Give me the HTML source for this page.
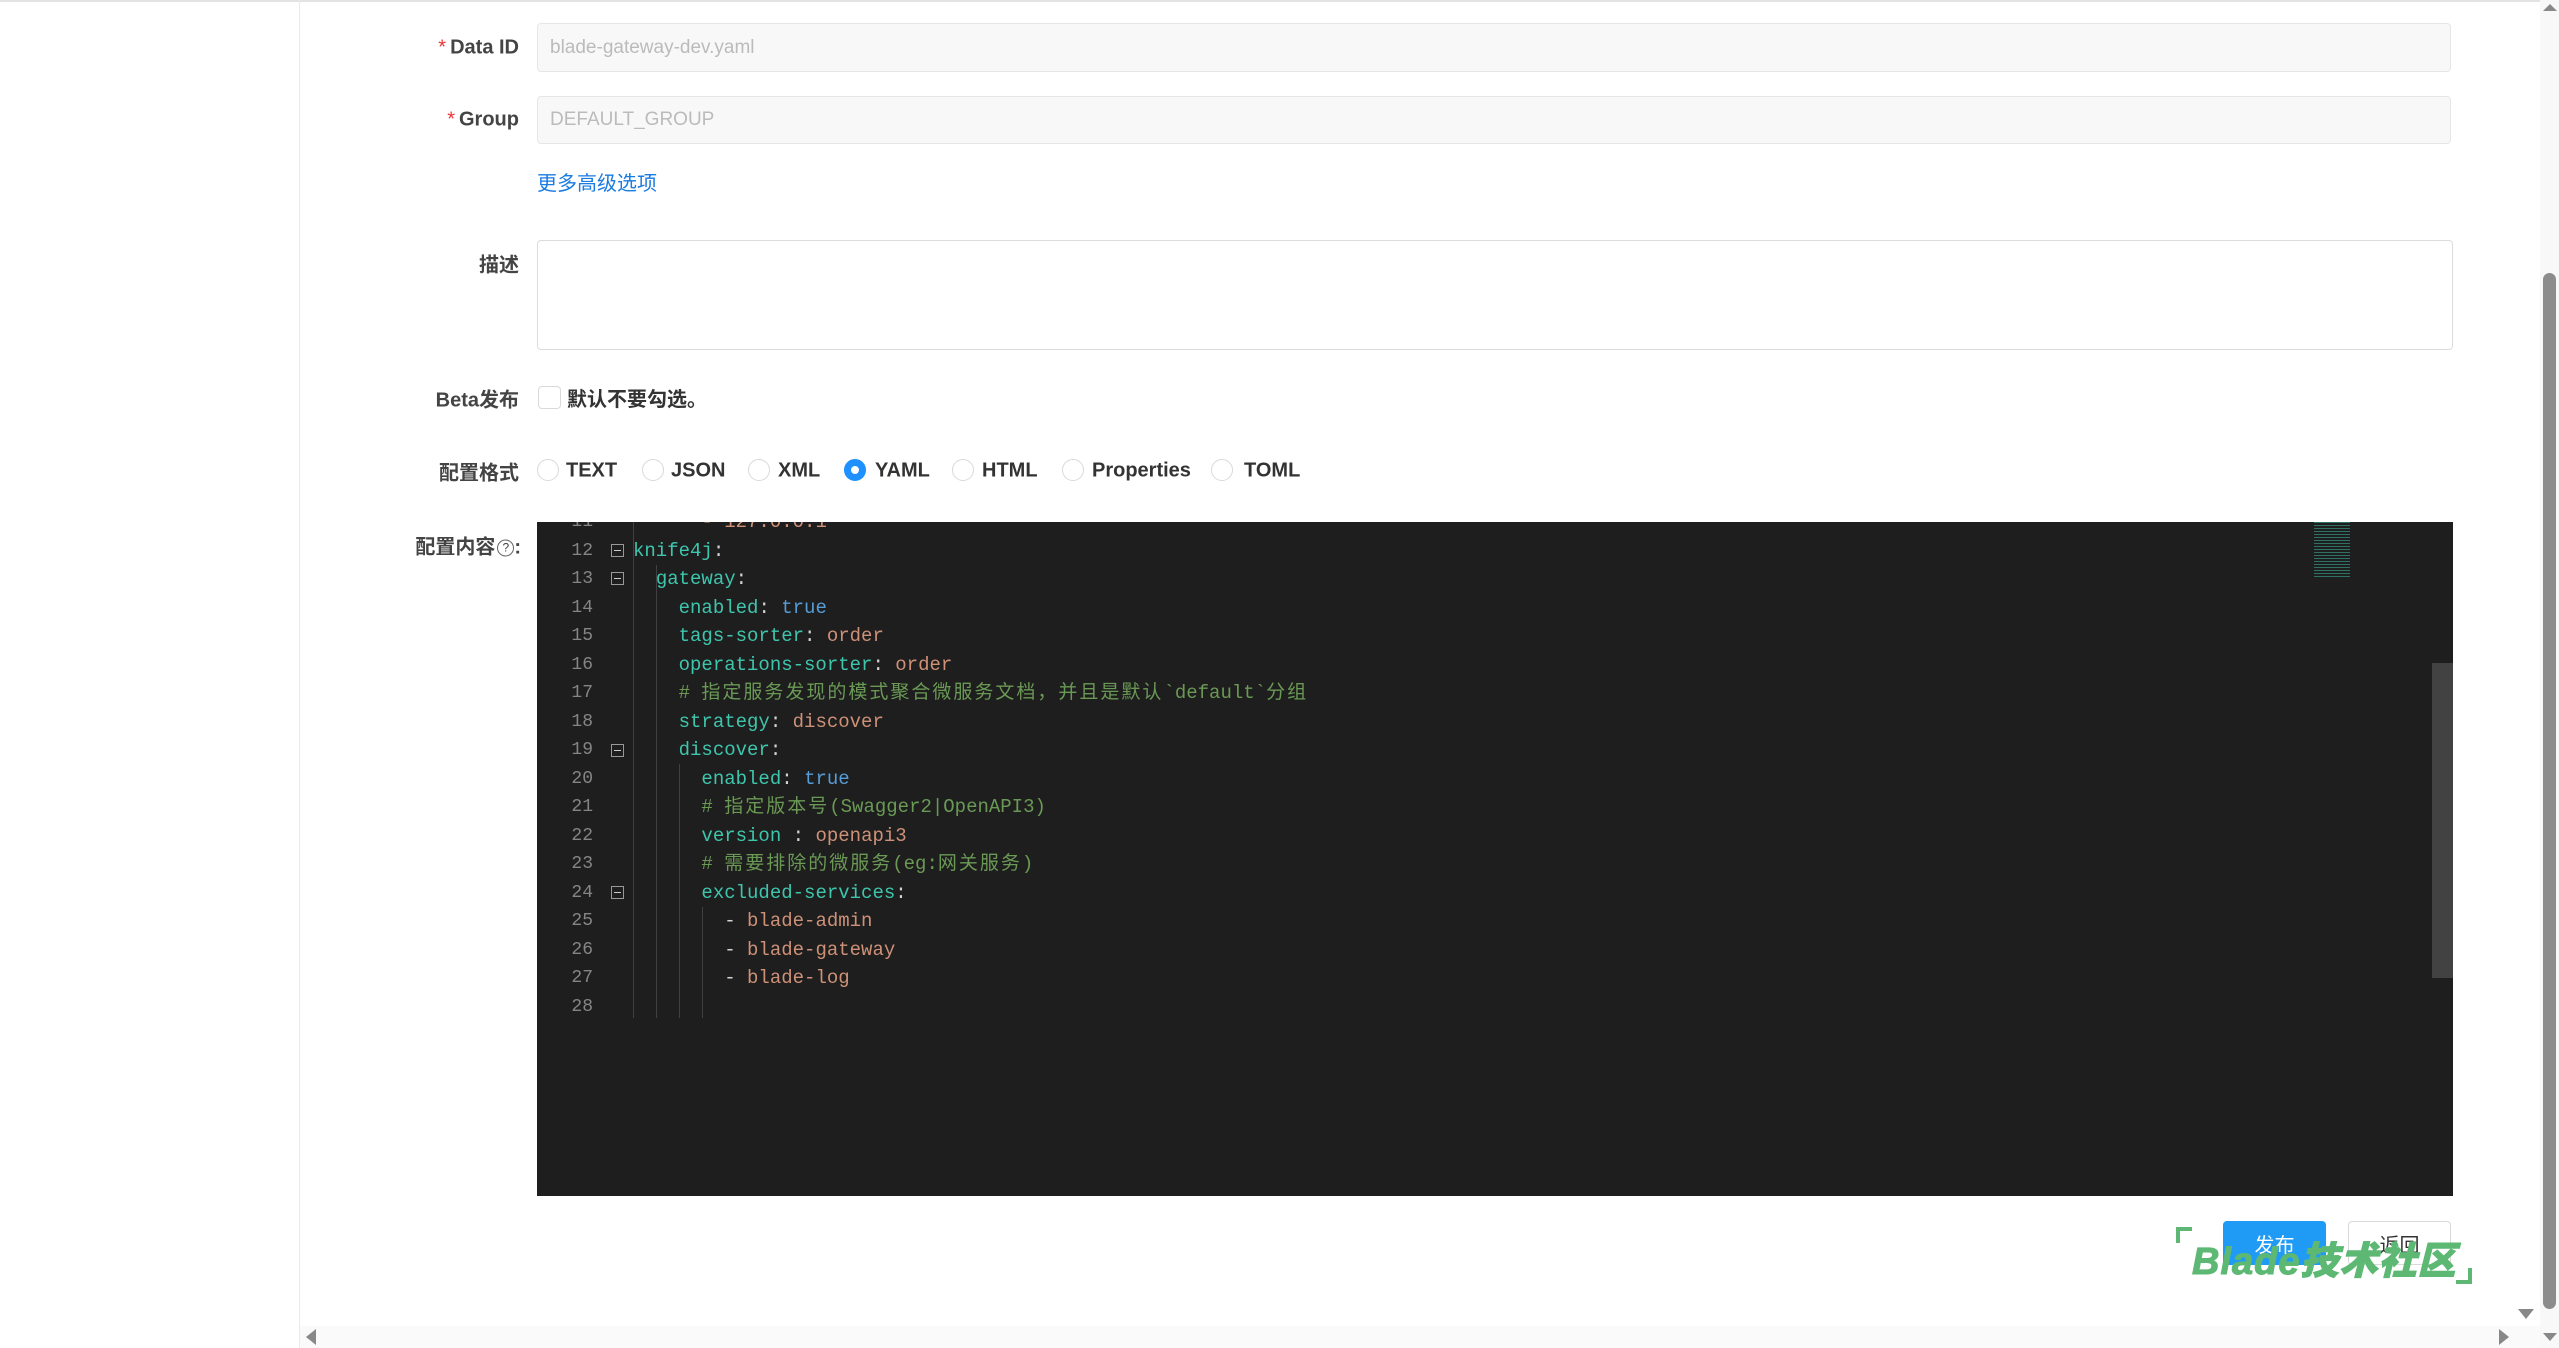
<!DOCTYPE html>
<html><head><meta charset="utf-8">
<style>
*{box-sizing:border-box;margin:0;padding:0}
html,body{width:2559px;height:1348px;overflow:hidden;background:#fff;font-family:"Liberation Sans","Noto Sans CJK SC",sans-serif;}
.abs{position:absolute}
.topline{left:0;top:0;width:2540px;height:2px;background:#e3e3e3}
.side{left:299px;top:0;width:1px;height:1348px;background:#ebebeb}
.lbl{position:absolute;right:2040px;font-size:20px;font-weight:bold;color:#444;white-space:nowrap;transform:translateY(-50%)}
.lbl .star{color:#e33;margin-right:4px;font-weight:normal}
.inp{position:absolute;left:537px;width:1914px;border:1px solid #e6e6e6;border-radius:4px;background:#f8f8f8;color:#bbb;font-size:19px;padding-left:12px;display:flex;align-items:center}
.radio{position:absolute;top:459px;width:22px;height:22px;border-radius:50%;border:1px solid #d9d9d9;background:#fff}
.rt{position:absolute;top:471px;transform:translateY(-50%);font-size:20px;font-weight:bold;color:#333}
.ed{left:537px;top:522px;width:1916px;height:674px;background:#1e1e1e;overflow:hidden}
.ln{position:absolute;left:0;width:56px;text-align:right;color:#858585;font-family:"Liberation Mono",monospace;font-size:18px;line-height:28.5px}
.code{position:absolute;left:96px;font-family:"Liberation Mono","Noto Sans CJK SC",monospace;font-size:19px;line-height:28.5px;white-space:pre;color:#d4d4d4}
.code i{font-style:normal;letter-spacing:2px}
.k{color:#3ec6ad}.s{color:#ce9178}.b{color:#569cd6}.c{color:#6a9955}
.fold{position:absolute;left:74px;width:13px;height:13px;border:1px solid #999}
.fold:after{content:"";position:absolute;left:2px;top:5px;width:7px;height:1px;background:#ccc}
.guide{position:absolute;width:1px;background:#404040}
.btn{position:absolute;top:1221px;height:44px;width:103px;border-radius:4px;font-size:20px;display:flex;align-items:center;justify-content:center}
</style></head><body>
<div class="abs topline"></div>
<div class="abs side"></div>

<div class="lbl" style="top:48px"><span class="star">*</span>Data ID</div>
<div class="inp" style="top:23px;height:49px">blade-gateway-dev.yaml</div>
<div class="lbl" style="top:120px"><span class="star">*</span>Group</div>
<div class="inp" style="top:96px;height:48px">DEFAULT_GROUP</div>
<div class="abs" style="left:537px;top:167px;font-size:20px;color:#1a7be0">更多高级选项</div>
<div class="lbl" style="top:263px">描述</div>
<div class="abs" style="left:537px;top:240px;width:1916px;height:110px;border:1px solid #dcdcdc;border-radius:4px"></div>
<div class="lbl" style="top:398px">Beta发布</div>
<div class="abs" style="left:538px;top:386px;width:23px;height:23px;border:1px solid #d9d9d9;border-radius:4px"></div>
<div class="abs" style="left:567px;top:383px;font-size:20px;font-weight:bold;color:#333">默认不要勾选。</div>
<div class="lbl" style="top:471px">配置格式</div>
<div class="radio" style="left:537px"></div><div class="rt" style="left:566px">TEXT</div>
<div class="radio" style="left:642px"></div><div class="rt" style="left:671px">JSON</div>
<div class="radio" style="left:748px"></div><div class="rt" style="left:778px">XML</div>
<div class="radio" style="left:844px;border:7px solid #1e90ff"></div><div class="rt" style="left:875px">YAML</div>
<div class="radio" style="left:952px"></div><div class="rt" style="left:982px">HTML</div>
<div class="radio" style="left:1062px"></div><div class="rt" style="left:1092px">Properties</div>
<div class="radio" style="left:1211px"></div><div class="rt" style="left:1244px">TOML</div>
<div class="lbl" style="top:545px;right:2038px">配置内容<span style="display:inline-block;width:17px;height:17px;border:1px solid #666;border-radius:50%;font-size:12px;line-height:15px;text-align:center;font-weight:normal;vertical-align:middle;margin-left:2px">?</span>:</div>

<div class="abs ed">
  <div class="guide" style="left:96px;top:0;height:496px"></div>
  <div class="guide" style="left:119px;top:43px;height:453px"></div>
  <div class="guide" style="left:142px;top:242px;height:254px"></div>
  <div class="guide" style="left:165px;top:385px;height:111px"></div>
  <div class="ln" style="top:-14px">11<br>12<br>13<br>14<br>15<br>16<br>17<br>18<br>19<br>20<br>21<br>22<br>23<br>24<br>25<br>26<br>27<br>28</div>
  <div class="fold" style="top:22px"></div>
  <div class="fold" style="top:50px"></div>
  <div class="fold" style="top:222px"></div>
  <div class="fold" style="top:364px"></div>
  <div class="code" style="top:-14px">      <span class="s">- 127.0.0.1</span>
<span class="k">knife4j</span>:
  <span class="k">gateway</span>:
    <span class="k">enabled</span>: <span class="b">true</span>
    <span class="k">tags-sorter</span>: <span class="s">order</span>
    <span class="k">operations-sorter</span>: <span class="s">order</span>
    <span class="c"># <i>指定服务发现的模式聚合微服务文档，并且是默认</i>`default`<i>分组</i></span>
    <span class="k">strategy</span>: <span class="s">discover</span>
    <span class="k">discover</span>:
      <span class="k">enabled</span>: <span class="b">true</span>
      <span class="c"># <i>指定版本号</i>(Swagger2|OpenAPI3)</span>
      <span class="k">version</span> : <span class="s">openapi3</span>
      <span class="c"># <i>需要排除的微服务</i>(eg:<i>网关服务</i>)</span>
      <span class="k">excluded-services</span>:
        - <span class="s">blade-admin</span>
        - <span class="s">blade-gateway</span>
        - <span class="s">blade-log</span>
</div>
  <div class="abs" style="left:1777px;top:0;width:36px;height:55px;opacity:.5;background:repeating-linear-gradient(180deg,#3ec6ad 0 1px,transparent 1px 3px)"></div>
  <div class="abs" style="left:1895px;top:141px;width:21px;height:315px;background:#424242"></div>
</div>

<div class="btn" style="left:2223px;background:#209bf5;color:#fff">发布</div>
<div class="btn" style="left:2348px;border:1px solid #d9d9d9;color:#333">返回</div>
<div class="abs" style="left:2176px;top:1227px;width:16px;height:16px;border-left:4px solid #5cb873;border-top:4px solid #5cb873"></div>
<div class="abs" style="left:2456px;top:1268px;width:16px;height:16px;border-right:4px solid #5cb873;border-bottom:4px solid #5cb873"></div>
<div class="abs" style="left:2192px;top:1230px;font-size:38px;font-weight:900;font-style:italic;color:#5cb873;letter-spacing:1px;white-space:nowrap;-webkit-text-stroke:1px #5cb873">Blade技术社区</div>

<div class="abs" style="left:300px;top:1326px;width:2240px;height:22px;background:#fafafa"></div>
<div class="abs" style="left:306px;top:1329px;width:0;height:0;border-top:8px solid transparent;border-bottom:8px solid transparent;border-right:10px solid #888"></div>
<div class="abs" style="left:2499px;top:1329px;width:0;height:0;border-top:8px solid transparent;border-bottom:8px solid transparent;border-left:10px solid #888"></div>
<div class="abs" style="left:2518px;top:1309px;width:0;height:0;border-left:8px solid transparent;border-right:8px solid transparent;border-top:10px solid #888"></div>
<div class="abs" style="left:2540px;top:0;width:19px;height:1348px;background:#f8f8f8"></div>
<div class="abs" style="left:2543px;top:273px;width:13px;height:1036px;background:#8c8c8c;border-radius:7px"></div>
<div class="abs" style="left:2543px;top:4px;width:0;height:0;border-left:7px solid transparent;border-right:7px solid transparent;border-bottom:7px solid #888"></div>
<div class="abs" style="left:2543px;top:1333px;width:0;height:0;border-left:7px solid transparent;border-right:7px solid transparent;border-top:8px solid #888"></div>
</body></html>
